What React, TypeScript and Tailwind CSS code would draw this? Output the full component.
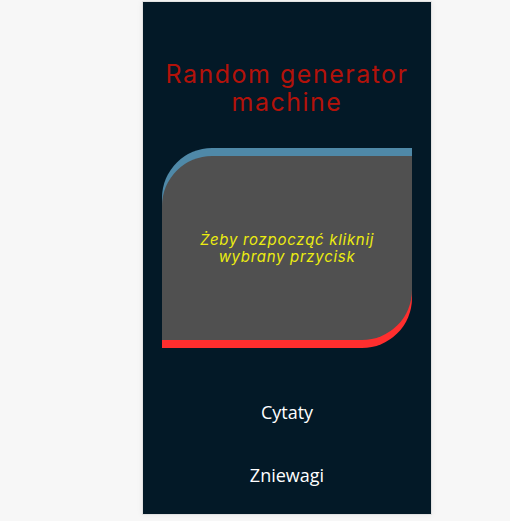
export default function App() {
  return (
    <div className="min-h-screen bg-[#f7f7f7] pt-px">
      <div className="ml-[142px] flex h-[514px] w-[290px] flex-col items-center border border-[#e2e2e2] bg-[#031927] shadow-[0_0_6px_rgba(0,0,0,0.06)]">
        <h1 className="mt-[58px] w-[270px] text-center font-['Inter',sans-serif] text-[25px] leading-[28px] font-normal tracking-[1.5px] text-[#b3120a]">
          Random generator machine
        </h1>
        <div className="mt-[40px] flex h-[184px] w-[250px] items-center justify-center rounded-tl-[50px] rounded-br-[50px] bg-[#505050] shadow-[0_-8px_0_#4f89a8,0_8px_0_#ff2e2e]">
          <p className="w-[220px] text-center font-['Inter',sans-serif] text-[15px] leading-[17px] tracking-[0.7px] text-[#ecec10] italic">
            Żeby rozpocząć kliknij wybrany przycisk
          </p>
        </div>
        <div className="mt-[60px] flex flex-col items-center gap-[38px] font-['Open_Sans',sans-serif] text-[18px] leading-[25px] text-white">
          <button>Cytaty</button>
          <button>Zniewagi</button>
        </div>
      </div>
    </div>
  );
}
